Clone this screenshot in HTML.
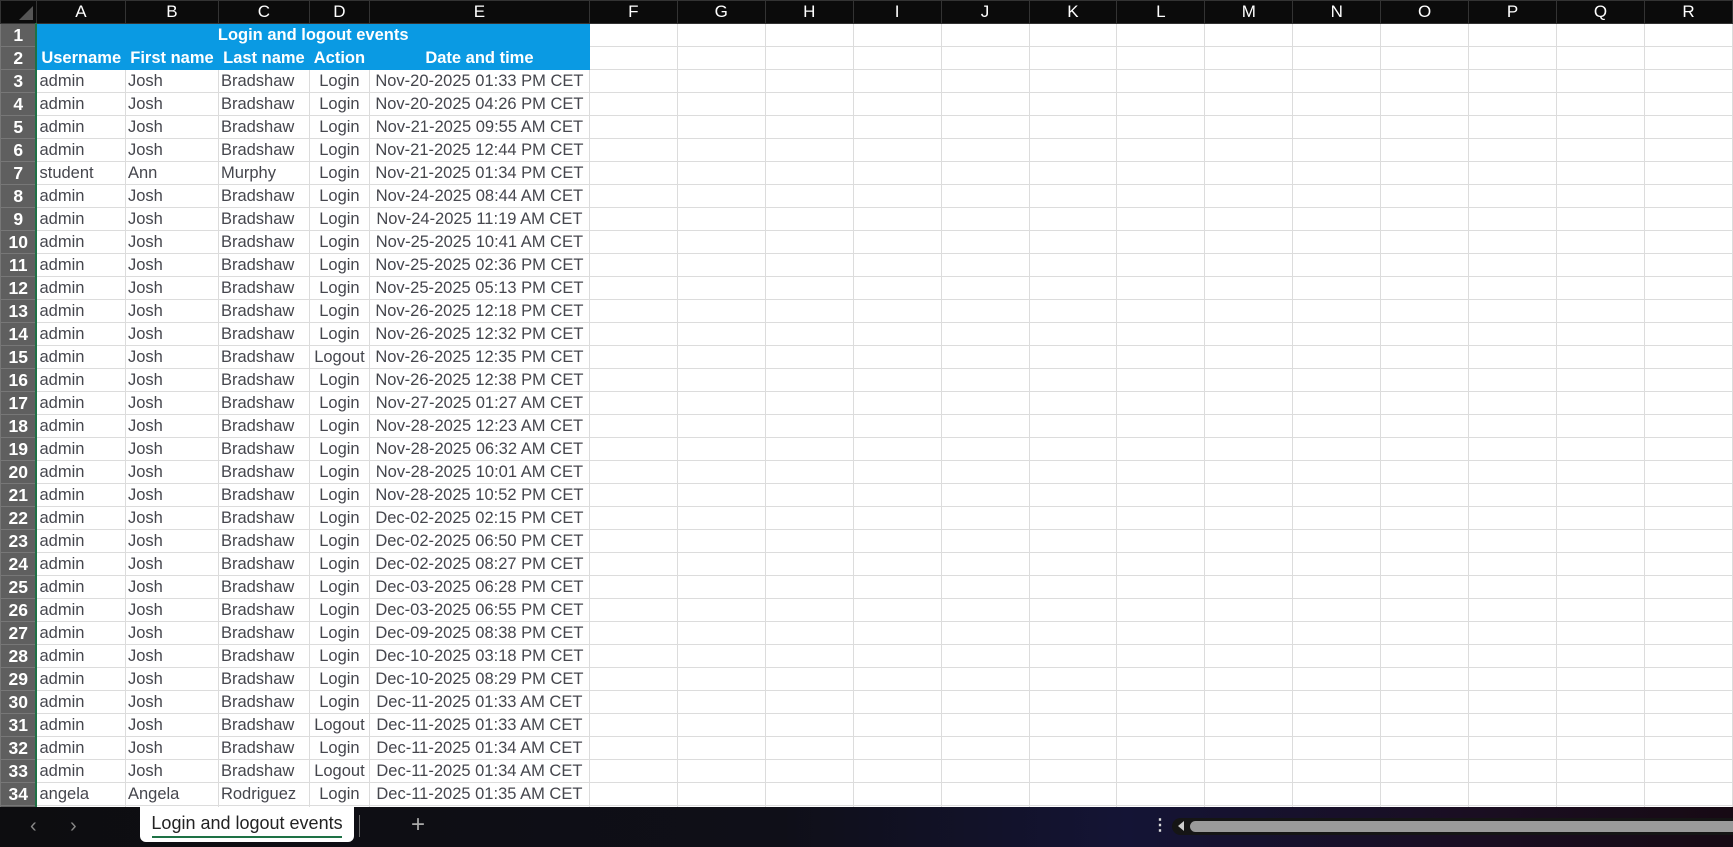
<!DOCTYPE html>
<html><head><meta charset="utf-8"><style>
*{margin:0;padding:0;box-sizing:border-box}
body{width:1733px;height:847px;overflow:hidden;background:#fff;font-family:"Liberation Sans",Arial,sans-serif;position:relative}
table{border-collapse:collapse;table-layout:fixed;position:absolute;left:0;top:0}
td,th{height:23px;font-size:16.5px;white-space:nowrap;overflow:hidden;padding:0 2px;border:1px solid #dcdcdc;color:#45464d;font-weight:normal}
thead th{background:#0b0b0b;color:#fff;border:1px solid #333;text-align:center;font-size:17px}
th.rh{background:#5f5f5f;color:#fff;text-align:center;border:1px solid #777;border-right:2px solid #1e7145;font-size:17.5px;font-weight:bold;padding:0}
thead th.corner{background:#0b0b0b;position:relative}
.corner:after{content:"";position:absolute;right:3px;bottom:3px;border-left:14px solid transparent;border-bottom:14px solid #555}
tr.b td.h{background:#0a9ae3;color:#fff;font-weight:bold;text-align:center;border-color:#0a9ae3}
td.c{text-align:center}
.bar{position:absolute;left:0;top:807px;width:1733px;height:40px;background:linear-gradient(90deg,#0d0d10 0%,#0f0f18 45%,#141435 65%,#1a0e22 85%,#170a14 100%)}
.tab{position:absolute;left:140px;top:0;width:214px;height:35px;background:#fff;border-radius:0 0 6px 6px;text-align:center;font-size:18px;color:#222;line-height:32px}
.tab:after{content:"";position:absolute;left:12px;right:12px;bottom:4px;height:2px;background:#1e7145}
.arr{position:absolute;top:8px;color:#888;font-size:20px}
.sb{position:absolute;left:1172px;top:11px;width:570px;height:17px;background:#151515;border-radius:9px}
.sb i{position:absolute;left:18px;top:3px;right:0;height:11px;background:#9a9a9a;border-radius:6px}
</style></head><body>
<table>
<colgroup><col style="width:36px"><col style="width:89px"><col style="width:93px"><col style="width:91px"><col style="width:60px"><col style="width:220px">
<col style="width:88px"><col style="width:88px"><col style="width:88px"><col style="width:88px"><col style="width:88px"><col style="width:88px"><col style="width:88px"><col style="width:88px"><col style="width:88px"><col style="width:88px"><col style="width:88px"><col style="width:88px"><col style="width:88px"></colgroup>
<thead><tr><th class="corner"></th><th>A</th><th>B</th><th>C</th><th>D</th><th>E</th><th>F</th><th>G</th><th>H</th><th>I</th><th>J</th><th>K</th><th>L</th><th>M</th><th>N</th><th>O</th><th>P</th><th>Q</th><th>R</th></tr></thead>
<tbody>
<tr class="b"><th class="rh">1</th><td class="h" colspan="5">Login and logout events</td><td></td><td></td><td></td><td></td><td></td><td></td><td></td><td></td><td></td><td></td><td></td><td></td><td></td></tr>
<tr class="b"><th class="rh">2</th><td class="h">Username</td><td class="h">First name</td><td class="h">Last name</td><td class="h">Action</td><td class="h">Date and time</td><td></td><td></td><td></td><td></td><td></td><td></td><td></td><td></td><td></td><td></td><td></td><td></td><td></td></tr>
<script>
var d=[["admin","Josh","Bradshaw","Login","Nov-20-2025 01:33 PM CET"],["admin","Josh","Bradshaw","Login","Nov-20-2025 04:26 PM CET"],["admin","Josh","Bradshaw","Login","Nov-21-2025 09:55 AM CET"],["admin","Josh","Bradshaw","Login","Nov-21-2025 12:44 PM CET"],["student","Ann","Murphy","Login","Nov-21-2025 01:34 PM CET"],["admin","Josh","Bradshaw","Login","Nov-24-2025 08:44 AM CET"],["admin","Josh","Bradshaw","Login","Nov-24-2025 11:19 AM CET"],["admin","Josh","Bradshaw","Login","Nov-25-2025 10:41 AM CET"],["admin","Josh","Bradshaw","Login","Nov-25-2025 02:36 PM CET"],["admin","Josh","Bradshaw","Login","Nov-25-2025 05:13 PM CET"],["admin","Josh","Bradshaw","Login","Nov-26-2025 12:18 PM CET"],["admin","Josh","Bradshaw","Login","Nov-26-2025 12:32 PM CET"],["admin","Josh","Bradshaw","Logout","Nov-26-2025 12:35 PM CET"],["admin","Josh","Bradshaw","Login","Nov-26-2025 12:38 PM CET"],["admin","Josh","Bradshaw","Login","Nov-27-2025 01:27 AM CET"],["admin","Josh","Bradshaw","Login","Nov-28-2025 12:23 AM CET"],["admin","Josh","Bradshaw","Login","Nov-28-2025 06:32 AM CET"],["admin","Josh","Bradshaw","Login","Nov-28-2025 10:01 AM CET"],["admin","Josh","Bradshaw","Login","Nov-28-2025 10:52 PM CET"],["admin","Josh","Bradshaw","Login","Dec-02-2025 02:15 PM CET"],["admin","Josh","Bradshaw","Login","Dec-02-2025 06:50 PM CET"],["admin","Josh","Bradshaw","Login","Dec-02-2025 08:27 PM CET"],["admin","Josh","Bradshaw","Login","Dec-03-2025 06:28 PM CET"],["admin","Josh","Bradshaw","Login","Dec-03-2025 06:55 PM CET"],["admin","Josh","Bradshaw","Login","Dec-09-2025 08:38 PM CET"],["admin","Josh","Bradshaw","Login","Dec-10-2025 03:18 PM CET"],["admin","Josh","Bradshaw","Login","Dec-10-2025 08:29 PM CET"],["admin","Josh","Bradshaw","Login","Dec-11-2025 01:33 AM CET"],["admin","Josh","Bradshaw","Logout","Dec-11-2025 01:33 AM CET"],["admin","Josh","Bradshaw","Login","Dec-11-2025 01:34 AM CET"],["admin","Josh","Bradshaw","Logout","Dec-11-2025 01:34 AM CET"],["angela","Angela","Rodriguez","Login","Dec-11-2025 01:35 AM CET"]];
var h="";for(var i=0;i<d.length;i++){var r=d[i];h+='<tr><th class="rh">'+(i+3)+'</th><td>'+r[0]+'</td><td>'+r[1]+'</td><td>'+r[2]+'</td><td class="c">'+r[3]+'</td><td class="c">'+r[4]+'</td>';for(var j=0;j<13;j++)h+='<td></td>';h+='</tr>';}
h+='<tr><th class="rh">35</th>';for(var j=0;j<18;j++)h+='<td></td>';h+='</tr>';
document.write(h);
</script>
</tbody></table>
<div class="bar">
<span class="arr" style="left:30px">&#8249;</span><span class="arr" style="left:70px">&#8250;</span>
<div class="tab">Login and logout events</div>
<div style="position:absolute;left:359px;top:8px;width:1px;height:22px;background:#666"></div>
<span style="position:absolute;left:411px;top:4px;color:#aaa;font-size:24px">+</span>
<span style="position:absolute;left:1152px;top:8px;color:#ddd;font-size:16px;font-weight:bold">&#8942;</span>
<div class="sb"><span style="position:absolute;left:6px;top:3px;width:0;height:0;border-top:5px solid transparent;border-bottom:5px solid transparent;border-right:6px solid #ccc"></span><i></i></div>
</div>
</body></html>
